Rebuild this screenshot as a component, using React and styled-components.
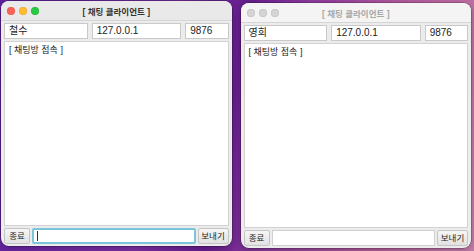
import styled, { createGlobalStyle } from 'styled-components'

const GlobalStyle = createGlobalStyle`
  html, body { margin: 0; padding: 0; }
  body {
    width: 474px;
    height: 251px;
    overflow: hidden;
    font-family: "Liberation Sans", "Noto Sans CJK KR", sans-serif;
    background: linear-gradient(100deg, #5e22a0 0%, #7b2ea2 35%, #651d8c 48%, #8c3a9c 60%, #b45c9c 80%, #c27ca8 100%);
  }
`

const Desktop = styled.div`
  display: flex;
  gap: 9px;
  padding: 1px 3px 0 1px;
  height: 251px;
  box-sizing: border-box;
  align-items: flex-start;
`

const Window = styled.div`
  width: 231px;
  height: 245px;
  margin-top: ${p => (p.$inactive ? '2px' : '0')};
  background: #ececec;
  border-radius: 8px;
  overflow: hidden;
  display: flex;
  flex-direction: column;
  box-shadow: 0 0 0 0.5px rgba(0, 0, 0, 0.35), 0 2px 6px rgba(0, 0, 0, 0.25);
`

const TitleBar = styled.div`
  height: 19px;
  flex: none;
  display: flex;
  align-items: center;
  position: relative;
  background: ${p => (p.$inactive ? '#f4f4f4' : '#e9e9e9')};
  border-bottom: 1px solid #d6d6d6;
`

const Lights = styled.div`
  display: flex;
  gap: 4px;
  padding-left: 6px;
`

const Light = styled.span`
  width: 8px;
  height: 8px;
  border-radius: 50%;
  background: ${p => p.$c};
  box-shadow: inset 0 0 0 0.5px rgba(0, 0, 0, 0.12);
`

const Title = styled.div`
  position: absolute;
  left: 0;
  right: 0;
  text-align: center;
  font-size: 8.5px;
  font-weight: bold;
  color: ${p => (p.$inactive ? '#a8a8a8' : '#333')};
`

const Body = styled.div`
  flex: 1;
  display: flex;
  flex-direction: column;
  padding: 2px 3px 2px 3px;
  gap: 2px;
`

const FieldRow = styled.div`
  display: flex;
  gap: 4px;
`

const Field = styled.div`
  height: 16px;
  box-sizing: border-box;
  width: ${p => p.$w}px;
  background: #fff;
  border: 1px solid #c9c9c9;
  font-size: 10px;
  line-height: 14px;
  padding-left: 4px;
  color: #222;
`

const ChatArea = styled.div`
  flex: 1;
  background: #fff;
  border: 1px solid #d2d2d2;
  font-size: 9px;
  padding: 1px 4px;
  color: #222;
`

const BottomRow = styled.div`
  display: flex;
  gap: 2px;
  align-items: center;
`

const Button = styled.div`
  width: ${p => p.$w}px;
  height: 16px;
  box-sizing: border-box;
  text-align: center;
  background: linear-gradient(#f6f6f6, #e2e2e2);
  border: 1px solid #c4c4c4;
  border-radius: 2px;
  font-size: 8.5px;
  line-height: 14px;
  color: #222;
`

const Input = styled.div`
  flex: 1;
  height: 16px;
  box-sizing: border-box;
  background: #fff;
  border: ${p => (p.$focus ? '2px solid #7cc4da' : '1px solid #d0d0d0')};
  border-radius: ${p => (p.$focus ? '2px' : '0')};
  display: flex;
  align-items: center;
  padding-left: 3px;
`

const Caret = styled.span`
  width: 1px;
  height: 10px;
  background: #333;
`

function ChatWindow({ name, inactive }) {
  return (
    <Window $inactive={inactive}>
      <TitleBar $inactive={inactive}>
        <Lights>
          <Light $c={inactive ? '#d4d4d4' : '#fe5f57'} />
          <Light $c={inactive ? '#d4d4d4' : '#febc2e'} />
          <Light $c={inactive ? '#d4d4d4' : '#28c840'} />
        </Lights>
        <Title $inactive={inactive}>[ 채팅 클라이언트 ]</Title>
      </TitleBar>
      <Body>
        <FieldRow>
          <Field $w={85}>{name}</Field>
          <Field $w={91}>127.0.0.1</Field>
          <Field $w={44}>9876</Field>
        </FieldRow>
        <ChatArea>[ 채팅방 접속 ]</ChatArea>
        <BottomRow>
          <Button $w={26}>종료</Button>
          <Input $focus={!inactive}>{!inactive && <Caret />}</Input>
          <Button $w={31}>보내기</Button>
        </BottomRow>
      </Body>
    </Window>
  )
}

export default function App() {
  return (
    <>
      <GlobalStyle />
      <Desktop>
        <ChatWindow name="철수" />
        <ChatWindow name="영희" inactive />
      </Desktop>
    </>
  )
}
